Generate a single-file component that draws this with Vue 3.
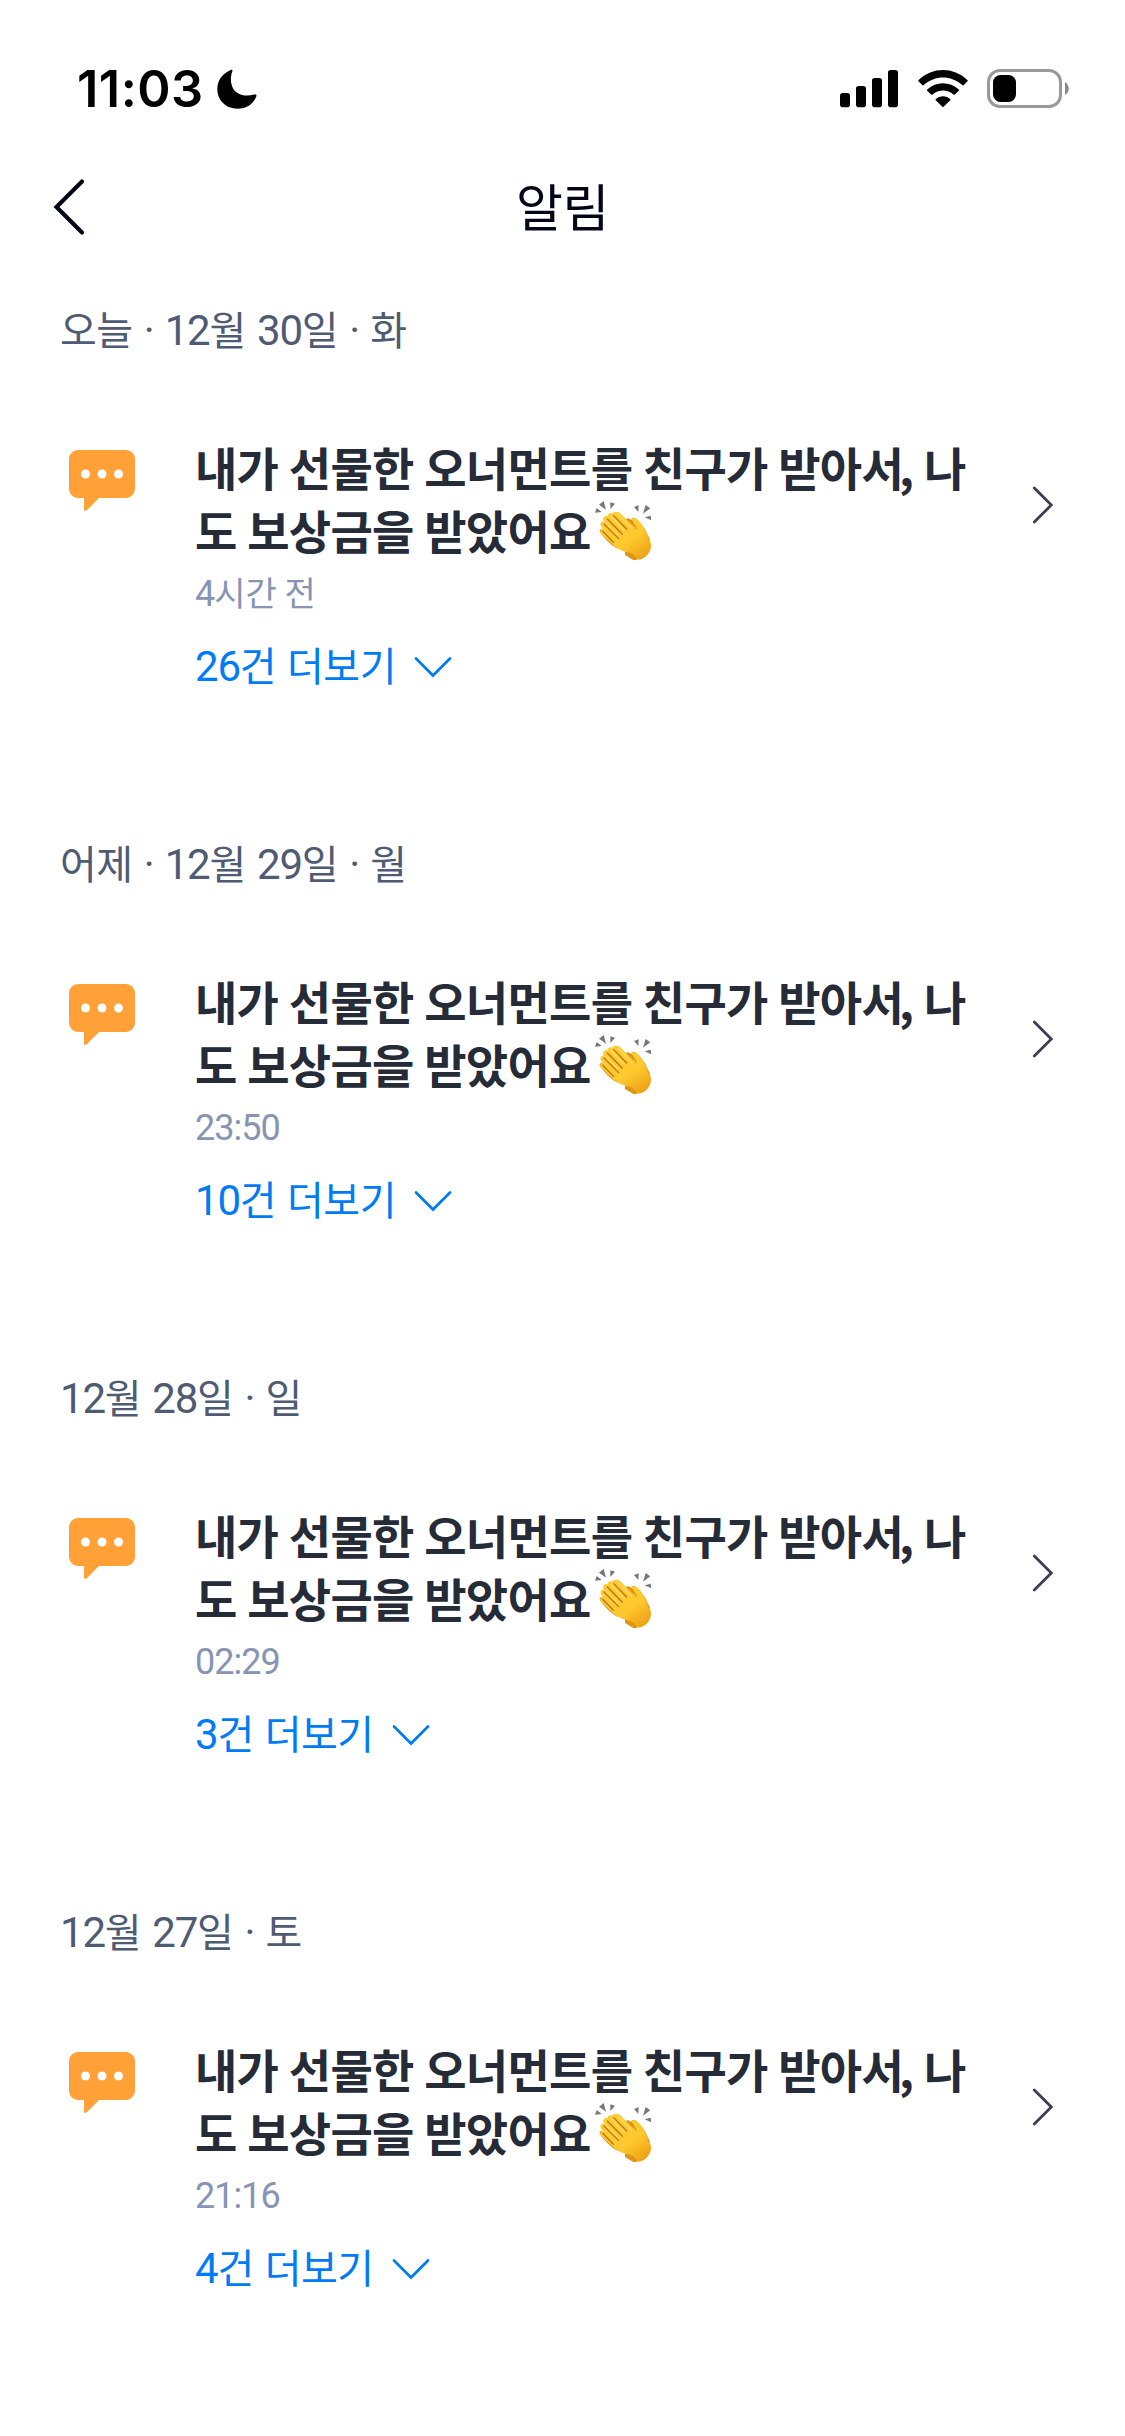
<script setup>
const groups = [
  { date: '오늘 · 12월 30일 · 화', time: '4시간 전', more: '26건 더보기' },
  { date: '어제 · 12월 29일 · 월', time: '23:50', more: '10건 더보기' },
  { date: '12월 28일 · 일', time: '02:29', more: '3건 더보기' },
  { date: '12월 27일 · 토', time: '21:16', more: '4건 더보기' },
]

// Digits and Hangul come from different families, so each run gets its own size.
const runs = (text) =>
  text.split(/([0-9:·]+)/).filter(Boolean).map((t) => ({ t, num: /[0-9:·]/.test(t) }))
</script>

<template>
  <div class="screen">
    <div class="status">
      <div class="clock">
        <span>11:03</span>
        <svg class="moon" width="40" height="40" viewBox="0 0 38 41" preserveAspectRatio="none">
          <path d="M12.6 1.2C13.8.2 15.2.9 14.6 2.4C12.9 7 12.6 13.2 14.6 18.4C17.5 25.700 25.500 29 35.300 26.200C37 25.700 38 26.600 37.300 28.200C34.400 36 28 40.700 19.500 40.700C8.500 40.700.3 32 .3 20.500C.3 12 5 4.600 12.600 1.200Z" />
        </svg>
      </div>
      <div class="indicators">
        <svg width="58" height="38" viewBox="0 0 58 38">
          <rect x="0" y="23" width="10" height="14.200" rx="2.800" />
          <rect x="16" y="16" width="10" height="21.200" rx="2.800" />
          <rect x="32" y="8" width="10" height="29.200" rx="2.800" />
          <rect x="48" y="0" width="10" height="37.200" rx="2.800" />
        </svg>
        <svg class="wifi" width="50" height="38" viewBox="0 0 48 38" preserveAspectRatio="none">
          <path d="M.5 11.300Q-.1 10.700.6 10C14-3.300 34-3.300 47.400 10Q48 10.700 47.500 11.300L43.800 15.200Q43.200 15.700 42.500 15.100C31.500 5 16.500 5 5.500 15.100Q4.800 15.700 4.200 15.200Z" />
          <path d="M8.800 20.700Q8.200 20.100 8.900 19.500C17.500 11 30.500 11 39.100 19.500Q39.700 20.100 39.200 20.700L35.300 24.600Q34.700 25.100 34.100 24.600C28.300 19.200 19.700 19.200 13.900 24.600Q13.300 25.100 12.700 24.600Z" />
          <path d="M17 30.200Q16.500 29.600 17.200 29C21 25.200 27 25.200 30.800 29Q31.500 29.600 31 30.200L24.600 36.800Q24 37.300 23.400 36.800Z" />
        </svg>
        <svg class="battery" width="83" height="40" viewBox="0 0 83 40">
          <rect x="1.500" y="1.500" width="72" height="36" rx="11.500" fill="none" stroke="#999" stroke-width="3" />
          <rect x="6" y="6" width="23" height="27" rx="7.500" />
          <path d="M78 13C83 16 83 23 78 26Z" fill="#888" />
        </svg>
      </div>
    </div>

    <header class="header">
      <svg class="back" width="32" height="60" viewBox="0 0 32 60">
        <path d="M29 4.500L3.500 30L29 55.500" fill="none" stroke="#020617" stroke-width="4.200" stroke-linecap="round" stroke-linejoin="miter" />
      </svg>
      <h1>알림</h1>
    </header>

    <main>
      <section v-for="g in groups" :key="g.date" class="group">
        <h2 class="date">
          <span v-for="(r, i) in runs(g.date)" :key="i" :class="{ num: r.num }">{{ r.t }}</span>
        </h2>
        <div class="item">
          <svg class="bubble" width="66" height="62" viewBox="0 0 66 62">
            <path fill="#ffa137" fill-rule="evenodd" d="M9 0H57A9 9 0 0 1 66 9V39A9 9 0 0 1 57 48H30L17.800 60.200Q15 62 15 59V48H9A9 9 0 0 1 0 39V9A9 9 0 0 1 9 0Z" />
            <g fill="#fff">
              <circle cx="16.500" cy="24" r="4.500" />
              <circle cx="33" cy="24" r="4.500" />
              <circle cx="49.500" cy="24" r="4.500" />
            </g>
          </svg>
          <div class="body">
            <p class="title">
              <span class="line"><span>내가 선물한 오너먼트를 친구가 받아서<span class="comma">,</span> 나</span></span>
              <span class="line">도 보상금을 받았어요<svg class="clap" width="57" height="59.300" viewBox="525 246 171 178" role="img" aria-label="박수">
                <defs>
                  <linearGradient id="skin" x1="0" y1="0" x2=".8" y2="1">
                    <stop offset="0" stop-color="#ffcb36" />
                    <stop offset=".65" stop-color="#ffc82e" />
                    <stop offset="1" stop-color="#eda216" />
                  </linearGradient>
                </defs>
                <g fill="#777">
                  <path d="M530 267L545 279L525 281ZM537 257L551 246L558 272ZM571 250L585 254L571 270ZM642 264L656 259L655 279ZM677 258L691 268L669 284ZM674 295L692 290L694 304Z" />
                </g>
                <path fill="#df9414" d="M614 303Q620 295 630 300L634 304Q634 295 643 297C656 302 666 320 675 331L690 362L650 423H640L615 408V398L640 380Z" />
                <path fill="#f7b925" d="M636 300Q642 294 650 302L672 330L686 355L650 352Z" />
                <path fill="#d78a10" d="M539 334Q540 329 546 331L596 391Q575 382 551 354L541 341Z" />
                <path fill="url(#skin)" d="M576 284C581 277 592 276 600 282L642 324C648 328 649 321 642 313L634 301C638 295 647 297 654 304C671 320 675 333 680 351C684 361 693 367 693 376C696 397 676 421 657 422C650 420 645 407 632 402C605 397 587 388 570 370L543 344C537 338 543 330 549 333L546 326C536 316 544 306 552 308C545 297 554 287 562 292C564 284 570 281 576 284Z" />
                <g fill="none" stroke="#bd7510" stroke-width="4" stroke-linecap="round">
                  <path d="M581 290L620 330M562 300L607 346M552 315L596 359M548 337L580 370" />
                </g>
                <path d="M595 287L635 328M572 292L610 332M555 309L592 347" fill="none" stroke="#ffdc61" stroke-width="4" stroke-linecap="round" />
                <path d="M633 304L646 321Q649 327 647 330" fill="none" stroke="#d58b12" stroke-width="3" />
              </svg></span>
            </p>
            <div class="time">
              <span v-for="(r, i) in runs(g.time)" :key="i" :class="{ num: r.num }">{{ r.t }}</span>
            </div>
            <div class="more">
              <span><span v-for="(r, i) in runs(g.more)" :key="i" :class="{ num: r.num }">{{ r.t }}</span></span>
              <svg class="down" width="38" height="22" viewBox="0 0 38 22">
                <path d="M2 2.500L19 19.500L36 2.500" fill="none" stroke="#007bf7" stroke-width="2.700" stroke-linecap="round" />
              </svg>
            </div>
          </div>
          <svg class="go" width="22" height="38" viewBox="0 0 22 38">
            <path d="M2.300 2L19.300 19L2.300 36" fill="none" stroke="#3f3c57" stroke-width="2.800" stroke-linecap="round" />
          </svg>
        </div>
      </section>
    </main>
  </div>
</template>

<style>
body { margin: 0; background: #fff; }
</style>

<style scoped>
.screen {
  width: 1125px;
  height: 2436px;
  overflow: hidden;
  background: #fff;
  font-family: "Noto Sans CJK KR", sans-serif;
}
h1, h2, p { margin: 0; font-weight: 400; }
svg { display: block; flex: none; }

.status {
  display: flex;
  justify-content: space-between;
  box-sizing: border-box;
  height: 148px;
  padding: 64px 55px 0 77px;
}
.clock { display: flex; height: 50px; align-items: center; }
.clock > span {
  width: 140px;
  font: 600 50.5px/50px Inter, sans-serif;
  letter-spacing: .5px;
  white-space: nowrap;
}
.indicators { display: flex; align-items: flex-start; padding-top: 6px; }
.wifi { margin-left: 19.5px; }
.battery { margin: -1px 0 0 19.5px; }

.header {
  display: grid;
  grid-template-columns: 1fr auto 1fr;
  align-items: center;
  height: 118px;
  padding: 0 53px;
}
h1 {
  padding-bottom: 4px;
  color: #020617;
  font-size: 51px;
  line-height: 74px;
  letter-spacing: -.5px;
}

main { padding-top: 5px; }
.group { height: 534px; }
.date {
  height: 120px;
  padding-left: 60px;
  color: #4f5b73;
  font-size: 40px;
  line-height: 114px;
  letter-spacing: -.5px;
  word-spacing: 2.7px;
  white-space: pre;
}
.item { display: flex; padding: 47px 0 0 69px; }
.bubble { margin: 12px 60px 0 0; }
.body { width: 837px; }
.title {
  color: #252b37;
  font-size: 46px;
  font-weight: 700;
  letter-spacing: -.7px;
  word-spacing: .8px;
}
.line { display: flex; height: 63px; line-height: 57px; white-space: pre; }
.comma { margin-left: -4px; }
.clap { margin: 0 0 0 4px; }
.time {
  height: 60px;
  color: #8794b4;
  font-size: 34px;
  line-height: 56px;
  white-space: pre;
}
.more {
  display: flex;
  align-items: flex-start;
  height: 86px;
  color: #007bf7;
  font-size: 40px;
  line-height: 81px;
  letter-spacing: -.5px;
  word-spacing: 2.5px;
  white-space: pre;
}
.down { margin: 32px 0 0 18px; }
.go { margin-top: 48px; }
.num { font-family: Roboto, sans-serif; }
.date .num, .more .num { font-size: 42px; letter-spacing: -1.2px; }
.time .num { font-size: 36px; letter-spacing: -1px; }
</style>
